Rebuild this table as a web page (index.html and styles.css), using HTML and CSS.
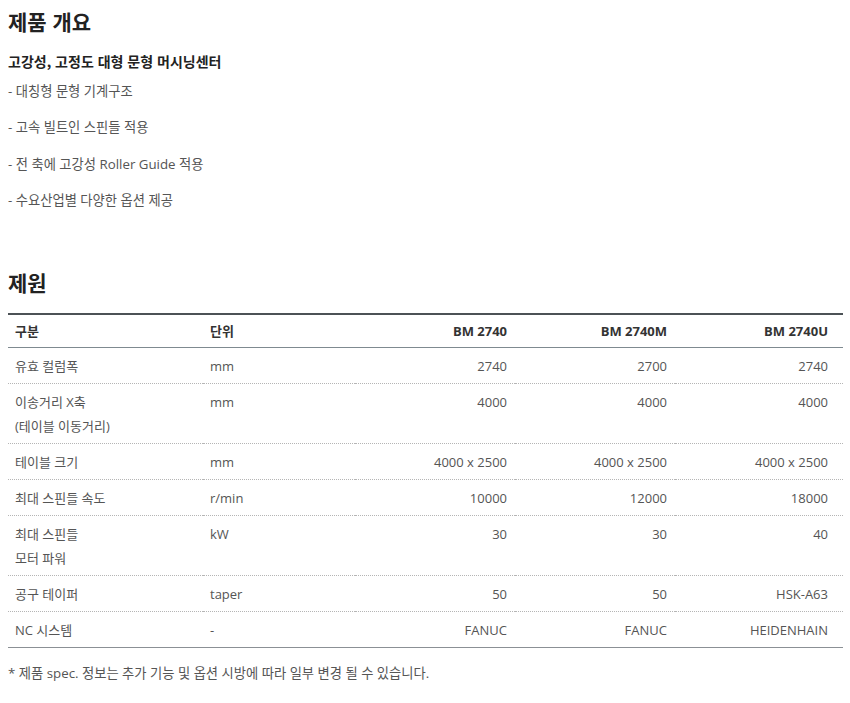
FILE: index.html
```html
<!DOCTYPE html>
<html lang="ko">
<head>
<meta charset="utf-8">
<title>제품 개요</title>
<link rel="stylesheet" href="styles.css">
</head>
<body>
<h2 class="sec-title">제품 개요</h2>
<h3 class="subtitle">고강성, 고정도 대형 문형 머시닝센터</h3>
<ul class="features">
  <li>- 대칭형 문형 기계구조</li>
  <li>- 고속 빌트인 스핀들 적용</li>
  <li>- 전 축에 고강성 Roller Guide 적용</li>
  <li>- 수요산업별 다양한 옵션 제공</li>
</ul>
<h2 class="sec-title spec-title">제원</h2>
<table class="spec">
  <colgroup>
    <col class="c1"><col class="c2"><col class="c3"><col class="c4"><col class="c5">
  </colgroup>
  <thead>
    <tr><th>구분</th><th>단위</th><th class="num">BM 2740</th><th class="num">BM 2740M</th><th class="num last">BM 2740U</th></tr>
  </thead>
  <tbody>
    <tr><td>유효 컬럼폭</td><td>mm</td><td class="num">2740</td><td class="num">2700</td><td class="num last">2740</td></tr>
    <tr><td>이송거리 X축<br>(테이블 이동거리)</td><td>mm</td><td class="num">4000</td><td class="num">4000</td><td class="num last">4000</td></tr>
    <tr><td>테이블 크기</td><td>mm</td><td class="num">4000 x 2500</td><td class="num">4000 x 2500</td><td class="num last">4000 x 2500</td></tr>
    <tr><td>최대 스핀들 속도</td><td>r/min</td><td class="num">10000</td><td class="num">12000</td><td class="num last">18000</td></tr>
    <tr><td>최대 스핀들<br>모터 파워</td><td>kW</td><td class="num">30</td><td class="num">30</td><td class="num last">40</td></tr>
    <tr><td>공구 테이퍼</td><td>taper</td><td class="num">50</td><td class="num">50</td><td class="num last">HSK-A63</td></tr>
    <tr><td>NC 시스템</td><td>-</td><td class="num">FANUC</td><td class="num">FANUC</td><td class="num last">HEIDENHAIN</td></tr>
  </tbody>
</table>
<p class="note">* 제품 spec. 정보는 추가 기능 및 옵션 시방에 따라 일부 변경 될 수 있습니다.</p>
</body>
</html>
```

FILE: styles.css
```css
html, body {
  background: #ffffff;
}
body {
  margin: 6px 7px 8px 8px;
  font-family: "Open Sans", "Noto Sans CJK KR", sans-serif;
  color: #555;
  font-size: 13px;
}
.sec-title {
  margin: 0;
  font-size: 21px;
  line-height: 30px;
  font-weight: 700;
  color: #222;
  font-family: "Noto Sans CJK KR", sans-serif;
}
.subtitle {
  margin: 15px 0 0;
  font-size: 14px;
  line-height: 20px;
  font-weight: 700;
  color: #222;
  font-family: "Noto Sans CJK KR", sans-serif;
}
.features {
  list-style: none;
  margin: 10px 0 0;
  padding: 0;
}
.features li {
  font-size: 13.3px;
  line-height: 20px;
  margin-top: 16.3px;
}
.features li:first-child {
  margin-top: 0;
}
.spec-title {
  margin-top: 57px;
}
.spec {
  margin-top: 16px;
  width: 100%;
  border-collapse: collapse;
  table-layout: fixed;
  border-top: 2px solid #4c5256;
  border-bottom: 1px solid #8b9095;
}
.c1 { width: 195px; }
.c2 { width: 152px; }
.c3 { width: 160px; }
.c4 { width: 160px; }
.spec th {
  font-weight: 700;
  color: #333;
  text-align: left;
  padding: 4px 8px 4px 7px;
  line-height: 24px;
  border-bottom: 1px solid #7f8a90;
}
.spec td {
  padding: 6px 8px 5px 7px;
  line-height: 24px;
  vertical-align: top;
  text-align: left;
  border-bottom: 1px dotted #b5b5b5;
}
.spec tbody tr:last-child td {
  border-bottom: none;
}
.spec .num {
  text-align: right;
}
.spec .last {
  padding-right: 15px;
}
.note {
  margin: 15px 0 0;
  font-size: 13.3px;
  line-height: 20px;
}
```
